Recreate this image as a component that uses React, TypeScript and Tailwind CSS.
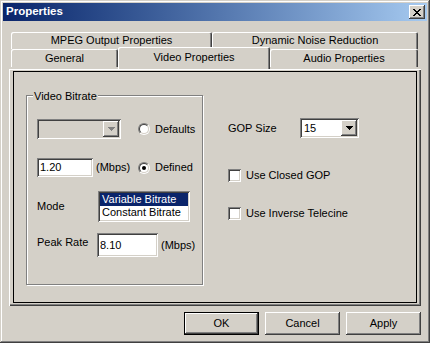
const raised =
  'shadow-[inset_-1px_-1px_0_#404040,inset_1px_1px_0_#ffffff,inset_-2px_-2px_0_#808080,inset_2px_2px_0_#d4d0c8]';
const sunken =
  'shadow-[inset_1px_1px_0_#808080,inset_-1px_-1px_0_#ffffff,inset_2px_2px_0_#404040,inset_-2px_-2px_0_#d4d0c8]';

function Arrow({ color }: { color: string }) {
  return (
    <svg width="7" height="4" viewBox="0 0 7 4" shapeRendering="crispEdges">
      <path d="M0 0h7v1H0zM1 1h5v1H1zM2 2h3v1H2zM3 3h1v1H3z" fill={color} />
    </svg>
  );
}

function Combo({ value, width, disabled }: { value?: string; width: string; disabled?: boolean }) {
  return (
    <div className={`${width} h-[20px] flex items-center p-[2px] ${sunken} ${disabled ? 'bg-[#d4d0c8]' : 'bg-white'}`}>
      <span className="flex-1 pl-[2px] leading-none">{value}</span>
      <div className={`w-[16px] h-[16px] bg-[#d4d0c8] flex items-center justify-center ${raised}`}>
        <Arrow color={disabled ? '#808080' : '#000000'} />
      </div>
    </div>
  );
}

function Edit({ value, width, height }: { value: string; width: string; height: string }) {
  return (
    <div className={`${width} ${height} bg-white flex items-center pl-[3px] ${sunken}`}>
      {value}
    </div>
  );
}

function Radio({ label, checked }: { label: string; checked?: boolean }) {
  return (
    <div className="flex items-center">
      <div className="w-[12px] h-[12px] rounded-full border border-[#808080] border-r-white border-b-white">
        <div className="w-full h-full rounded-full border border-[#404040] border-r-[#d4d0c8] border-b-[#d4d0c8] bg-white flex items-center justify-center">
          {checked && <div className="w-[4px] h-[4px] rounded-full bg-black" />}
        </div>
      </div>
      <span className="ml-[5px]">{label}</span>
    </div>
  );
}

function Check({ label }: { label: string }) {
  return (
    <div className="flex items-center h-[13px]">
      <div className={`w-[13px] h-[13px] bg-white ${sunken}`} />
      <span className="ml-[5px]">{label}</span>
    </div>
  );
}

function Tab({ label, width, height }: { label: string; width: string; height: string }) {
  return (
    <div
      className={`${width} ${height} rounded-t-[2px] flex items-center justify-center shadow-[inset_1px_1px_0_#ffffff,inset_-1px_0_0_#404040,inset_-2px_0_0_#808080]`}
    >
      {label}
    </div>
  );
}

function Button({ label, isDefault }: { label: string; isDefault?: boolean }) {
  return (
    <div
      className={`w-[75px] h-[23px] flex items-center justify-center ${
        isDefault
          ? 'border border-black shadow-[inset_-1px_-1px_0_#404040,inset_1px_1px_0_#ffffff,inset_-2px_-2px_0_#808080]'
          : raised
      }`}
    >
      {label}
    </div>
  );
}

export default function App() {
  return (
    <div
      className="w-[430px] h-[343px] bg-[#d4d0c8] text-black text-[11px] flex flex-col shadow-[inset_-1px_-1px_0_#404040,inset_1px_1px_0_#d4d0c8,inset_-2px_-2px_0_#808080,inset_2px_2px_0_#ffffff]"
      style={{ fontFamily: '"Liberation Sans", Arial, sans-serif' }}
    >
      {/* title bar */}
      <div className="mx-[3px] mt-[3px] h-[18px] bg-gradient-to-r from-[#0a246a] to-[#a6caf0] flex items-center justify-between pl-[3px] pr-[2px]">
        <span className="text-white font-bold text-[11.5px]">Properties</span>
        <div className={`w-[16px] h-[14px] bg-[#d4d0c8] flex items-center justify-center ${raised}`}>
          <svg width="8" height="7" viewBox="0 0 8 7" shapeRendering="crispEdges">
            <path
              d="M0 0h2v1H0zM6 0h2v1H6zM1 1h2v1H1zM5 1h2v1H5zM2 2h4v1H2zM3 3h2v1H3zM2 4h4v1H2zM1 5h2v1H1zM5 5h2v1H5zM0 6h2v1H0zM6 6h2v1H6z"
              fill="#000"
            />
          </svg>
        </div>
      </div>

      {/* tabs */}
      <div className="ml-[11px] mt-[11px] flex">
        <Tab label="MPEG Output Properties" width="w-[201px]" height="h-[17px]" />
        <Tab label="Dynamic Noise Reduction" width="w-[206px]" height="h-[17px]" />
      </div>
      <div className="ml-[11px] flex items-start">
        <Tab label="General" width="w-[107px]" height="h-[18px]" />
        <div className="relative z-10 -mt-[2px] w-[152px] h-[22px] bg-[#d4d0c8] rounded-t-[2px] flex items-center justify-center pb-[2px] shadow-[inset_1px_1px_0_#ffffff,inset_-1px_0_0_#404040,inset_-2px_0_0_#808080]">
          Video Properties
        </div>
        <Tab label="Audio Properties" width="w-[148px]" height="h-[18px]" />
      </div>

      {/* panel */}
      <div className="ml-[9px] w-[412px] h-[237px] pt-[2px] pl-[4px] pr-[4px] pb-[3px] shadow-[inset_1px_1px_0_#ffffff,inset_-1px_-1px_0_#404040,inset_-2px_-2px_0_#808080]">
        <div className="w-full h-full border border-black flex pl-[12px] pt-[23px]">
          {/* group box */}
          <div className="relative w-[177px] h-[190px] border border-[#808080] shadow-[1px_1px_0_#ffffff,inset_1px_1px_0_#ffffff]">
            <span className="absolute left-[6px] -top-[8px] px-[1px] bg-[#d4d0c8]">Video Bitrate</span>
            <div className="flex flex-col pl-[10px] pt-[23px]">
              <div className="flex items-center h-[20px]">
                <div className="w-[101px]">
                  <Combo width="w-[84px]" disabled />
                </div>
                <Radio label="Defaults" />
              </div>
              <div className="flex items-center h-[19px] mt-[19px]">
                <div className="w-[101px] flex items-center">
                  <Edit value="1.20" width="w-[56px]" height="h-[19px]" />
                  <span className="ml-[3px]">(Mbps)</span>
                </div>
                <Radio label="Defined" checked />
              </div>
              <div className="flex items-center mt-[14px]">
                <span className="w-[61px] pb-[1px]">Mode</span>
                <div className={`w-[92px] h-[31px] bg-white p-[2px] ${sunken}`}>
                  <div className="h-[13px] bg-[#0a246a] text-white pl-[2px] leading-[13px]">Variable Bitrate</div>
                  <div className="h-[13px] pl-[2px] leading-[13px]">Constant Bitrate</div>
                </div>
              </div>
              <div className="flex items-center mt-[11px]">
                <span className="w-[60px] pb-[6px]">Peak Rate</span>
                <Edit value="8.10" width="w-[61px]" height="h-[24px]" />
                <span className="ml-[3px]">(Mbps)</span>
              </div>
            </div>
          </div>

          {/* right column */}
          <div className="ml-[25px] mt-[23px] flex flex-col">
            <div className="flex items-center h-[20px]">
              <span className="w-[72px]">GOP Size</span>
              <Combo value="15" width="w-[59px]" />
            </div>
            <div className="mt-[31px]">
              <Check label="Use Closed GOP" />
            </div>
            <div className="mt-[25px]">
              <Check label="Use Inverse Telecine" />
            </div>
          </div>
        </div>
      </div>

      {/* buttons */}
      <div className="flex gap-[6px] ml-[184px] mt-[6px]">
        <Button label="OK" isDefault />
        <Button label="Cancel" />
        <Button label="Apply" />
      </div>
    </div>
  );
}
